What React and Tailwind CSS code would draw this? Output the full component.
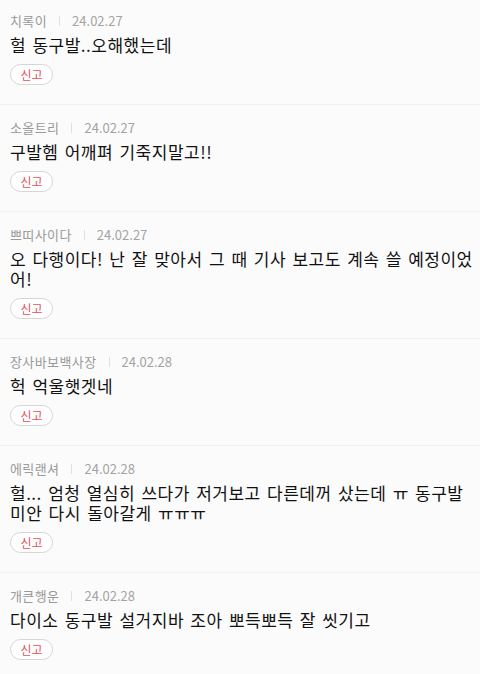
import React from "react";

const comments = [
  { name: "치록이", date: "24.02.27", text: "헐 동구발..오해했는데" },
  { name: "소올트리", date: "24.02.27", text: "구발헴 어깨펴 기죽지말고!!" },
  {
    name: "쁘띠사이다",
    date: "24.02.27",
    text: "오 다행이다! 난 잘 맞아서 그 때 기사 보고도 계속 쓸 예정이었어!",
  },
  { name: "장사바보백사장", date: "24.02.28", text: "헉 억울햇겟네" },
  {
    name: "에릭랜셔",
    date: "24.02.28",
    text: "헐... 엄청 열심히 쓰다가 저거보고 다른데꺼 샀는데 ㅠ 동구발 미안 다시 돌아갈게 ㅠㅠㅠ",
  },
  { name: "개큰행운", date: "24.02.28", text: "다이소 동구발 설거지바 조아 뽀득뽀득 잘 씻기고" },
];

const CommentItem = ({ comment }) => (
  <div className="border-b border-[#f0f0f0] pl-[10px] pr-0 pt-[14px] pb-[19px]">
    <div className="flex items-center text-[13px] leading-[18px] text-[#999999]">
      <span className="tracking-[0.4px]">{comment.name}</span>
      <span className="mx-[12px] h-[10px] w-px bg-[#e0e0e0]" />
      <span className="text-[#a3a3a3]">{comment.date}</span>
    </div>
    <p className="mt-[5px] text-[17px] leading-[20px] tracking-[0.5px] text-[#111111] [word-spacing:2px]">
      {comment.text}
    </p>
    <button className="mt-[9px] flex h-[21px] w-[43px] items-center justify-center rounded-full border border-[#d6d6d6] bg-white text-[12px] leading-none text-[#e8505b]">
      신고
    </button>
  </div>
);

export default function App() {
  return (
    <div
      className="min-h-[674px] overflow-hidden bg-[#fbfbfb]"
      style={{ fontFamily: '"Noto Sans CJK KR", "Noto Sans", sans-serif' }}
    >
      <div className="-mt-[2px]">
        {comments.map((c, i) => (
          <CommentItem key={i} comment={c} />
        ))}
      </div>
    </div>
  );
}
